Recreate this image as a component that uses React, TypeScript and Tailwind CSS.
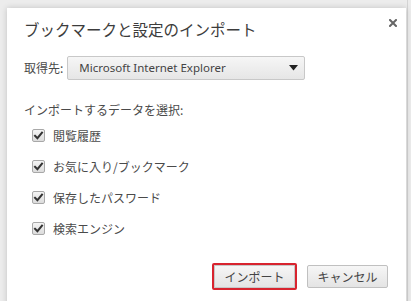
import React from "react";

const jp = { fontFamily: '"Noto Sans CJK JP", "Noto Sans", sans-serif' };

function Check() {
  return (
    <span className="flex h-[13px] w-[13px] items-center justify-center rounded-[2px] border border-[#a8a8a8] bg-gradient-to-b from-[#f4f4f4] to-[#dcdcdc]">
      <svg width="11" height="11" viewBox="0 0 11 11">
        <path d="M2 5.8 L4.4 8.2 L9 2.6" fill="none" stroke="#333" strokeWidth="2" strokeLinecap="square" />
      </svg>
    </span>
  );
}

function Item({ label }: { label: string }) {
  return (
    <div className="flex h-[31px] items-center gap-[8px] pl-[25px]">
      <Check />
      <span className="text-[12px] text-[#4a4a4a]" style={jp}>{label}</span>
    </div>
  );
}

export default function App() {
  return (
    <div className="flex h-[301px] w-[411px] overflow-hidden bg-[#ececec]" style={jp}>
      <div className="pl-[7px] pt-[8px]">
        <div className="relative h-[300px] w-[399px] bg-white shadow-[0_0_6px_rgba(0,0,0,0.18)]">
          <svg className="absolute right-[9px] top-[11px]" width="8" height="8" viewBox="0 0 8 8">
            <path d="M1 1 L7 7 M7 1 L1 7" stroke="#666" strokeWidth="2" strokeLinecap="square" />
          </svg>
          <div className="px-[17px] pt-[10px]">
            <div className="text-[15.5px] leading-[22px] text-[#3c3c3c]">ブックマークと設定のインポート</div>
            <div className="mt-[16px] flex items-center gap-[4px]">
              <span className="text-[12px] text-[#4a4a4a]">取得先:</span>
              <div className="flex h-[24px] w-[238px] items-center justify-between rounded-[2px] border border-[#c8c8c8] bg-gradient-to-b from-[#f6f6f6] to-[#e6e6e6] pl-[11px] pr-[6px]">
                <span className="text-[11.5px] text-[#444]" style={{ fontFamily: '"Noto Sans", "Open Sans", sans-serif' }}>Microsoft Internet Explorer</span>
                <svg width="9" height="6" viewBox="0 0 9 6"><path d="M0 0 H9 L4.5 5.5 Z" fill="#222" /></svg>
              </div>
            </div>
            <div className="mt-[21px] text-[12px] leading-[18px] text-[#4a4a4a]">インポートするデータを選択:</div>
          </div>
          <div className="mt-[1px] flex flex-col">
            <Item label="閲覧履歴" />
            <Item label="お気に入り/ブックマーク" />
            <Item label="保存したパスワード" />
            <Item label="検索エンジン" />
          </div>
          <div className="mt-[19px] flex justify-end gap-[10px] pr-[18px]">
            <div className="rounded-[2px] border-2 border-[#d8242f] p-0">
              <button className="flex h-[23px] w-[81px] items-center justify-center border border-[#c8c8c8] bg-gradient-to-b from-[#f6f6f6] to-[#e4e4e4] text-[12px] text-[#444]">インポート</button>
            </div>
            <div className="pt-[2px]">
              <button className="flex h-[23px] w-[81px] items-center justify-center rounded-[2px] border border-[#c0c0c0] bg-gradient-to-b from-[#f6f6f6] to-[#e4e4e4] text-[12px] text-[#444]">キャンセル</button>
            </div>
          </div>
        </div>
      </div>
      <div className="ml-[1px] h-full w-[1px] bg-[#d4d4d4]" />
    </div>
  );
}
